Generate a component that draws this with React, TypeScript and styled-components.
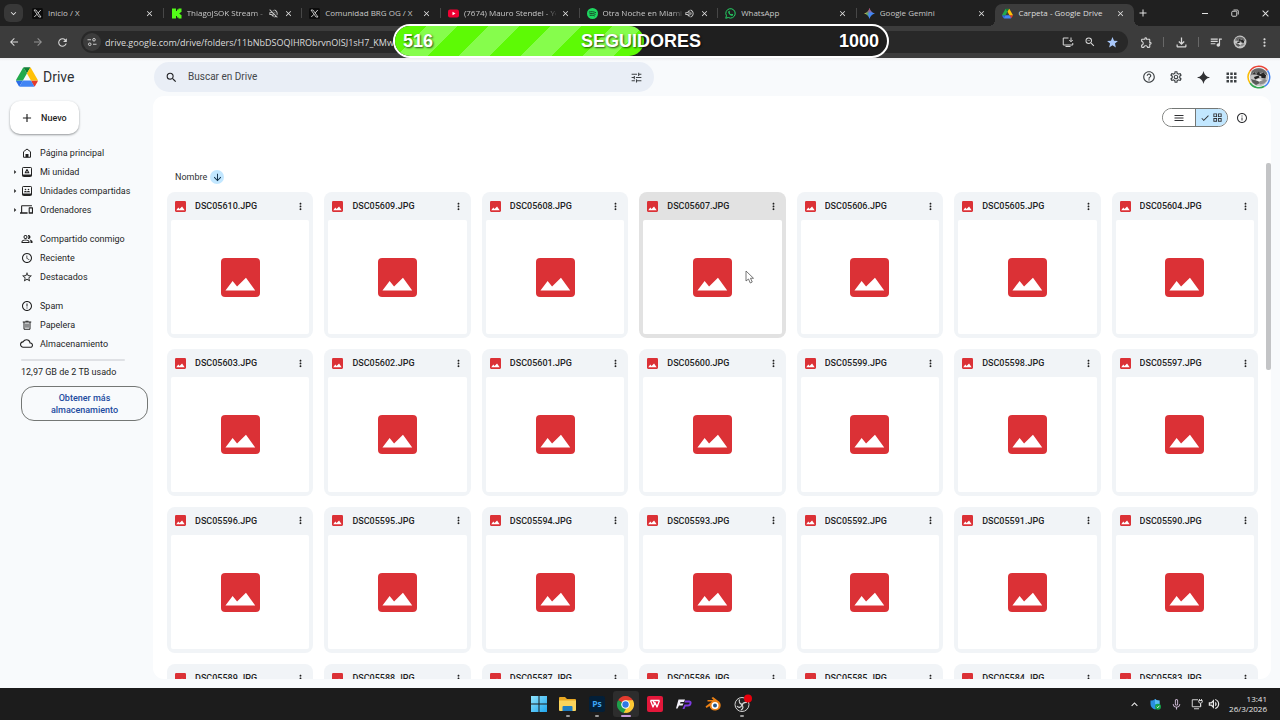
import React from "react";
import styled, { createGlobalStyle, css } from "styled-components";
import {
  MdAdd,
  MdApps,
  MdArrowBack,
  MdArrowDownward,
  MdArrowForward,
  MdArrowRight,
  MdCheck,
  MdClose,
  MdErrorOutline,
  MdHelpOutline,
  MdKeyboardArrowDown,
  MdKeyboardArrowUp,
  MdMenu,
  MdMicNone,
  MdMoreVert,
  MdOutlineAccessTime,
  MdOutlineCloud,
  MdOutlineDevices,
  MdOutlineExtension,
  MdOutlineFileDownload,
  MdOutlineGridView,
  MdOutlineInfo,
  MdOutlinePeopleAlt,
  MdOutlineQueueMusic,
  MdOutlineSettings,
  MdOutlineVolumeOff,
  MdOutlineVolumeUp,
  MdRefresh,
  MdSearch,
  MdStar,
  MdStarOutline,
  MdTune,
  MdZoomOut,
} from "react-icons/md";

const uiFont = `"Open Sans", "Noto Sans", sans-serif`;
const driveFont = `Roboto, "Noto Sans", sans-serif`;

const GlobalStyle = createGlobalStyle`
  *, *::before, *::after { box-sizing: border-box; }
  body { margin: 0; background: #f8fafc; }
  button, input { font: inherit; color: inherit; margin: 0; padding: 0; border: 0; background: none; }
  a { color: inherit; text-decoration: none; }
  ul { list-style: none; margin: 0; padding: 0; }
  svg { display: block; flex: none; }
`;

const Desktop = styled.div`
  position: relative;
  display: flex;
  flex-direction: column;
  height: 100vh;
  overflow: hidden;
  font-family: ${driveFont};
  font-size: 9px;
  line-height: 12px;
  color: #1f1f1f;
`;

/* ---------- Browser frame ---------- */

const TabStrip = styled.header`
  display: flex;
  height: 26px;
  padding-left: 4px;
  background: #202020;
  color: #c9c9c9;
  font-family: ${uiFont};
  font-size: 8px;
`;

const TabSearch = styled.button`
  display: grid;
  place-items: center;
  width: 19px;
  height: 18px;
  margin: 4px 2px 0 0;
  border-radius: 6px;
  background: #383838;
  color: #e6e6e6;
`;

const TabList = styled.ul`
  display: flex;
  flex: 1;
  min-width: 0;
`;

const Tab = styled.li<{ $active?: boolean; $divider?: boolean }>`
  position: relative;
  display: flex;
  align-items: center;
  gap: 5px;
  flex: 1 1 0;
  min-width: 0;
  height: 22px;
  margin-top: 4px;
  padding: 0 9px 4px 7px;

  ${(p) =>
    p.$divider &&
    css`
      &::after {
        content: "";
        position: absolute;
        right: 0;
        top: 4px;
        width: 1px;
        height: 10px;
        background: #474747;
      }
    `}

  ${(p) =>
    p.$active &&
    css`
      border-radius: 7px 7px 0 0;
      background: #3c3c3c;
      color: #dedede;
      &::before,
      &::after {
        content: "";
        position: absolute;
        bottom: 0;
        width: 6px;
        height: 6px;
      }
      &::before {
        left: -6px;
        background: radial-gradient(circle at 0 0, transparent 6px, #3c3c3c 6px);
      }
      &::after {
        right: -6px;
        background: radial-gradient(circle at 100% 0, transparent 6px, #3c3c3c 6px);
      }
    `}
`;

const TabTitle = styled.span<{ $faded?: boolean }>`
  flex: 1;
  min-width: 0;
  overflow: hidden;
  white-space: nowrap;
  ${(p) =>
    p.$faded &&
    css`
      mask-image: linear-gradient(to right, #000 calc(100% - 12px), #0003);
    `}
`;

const TabAudio = styled.span`
  margin: 0 -1px 0 -4px;
`;

const StripButton = styled.button<{ $width?: number }>`
  display: grid;
  place-items: center;
  width: ${(p) => p.$width ?? 10}px;
  color: #e3e3e3;
`;

const WindowControls = styled.div`
  display: flex;
  margin-left: 38px;
`;

const Toolbar = styled.div`
  display: flex;
  align-items: center;
  height: 32px;
  padding: 0 4px 0 2px;
  background: #3c3c3c;
  color: #d8d8d8;
`;

const ToolButton = styled.button<{ $dim?: boolean; $width?: number }>`
  display: grid;
  place-items: center;
  width: ${(p) => p.$width ?? 24}px;
  height: 22px;
  opacity: ${(p) => (p.$dim ? 0.55 : 1)};
`;

const ToolDivider = styled.span`
  width: 1px;
  height: 10px;
  margin: 0 5px;
  background: #686868;
`;

const AddressBar = styled.form`
  display: flex;
  align-items: center;
  flex: 1;
  height: 22px;
  margin: 0 6px 0 7px;
  padding: 0 5px 0 2px;
  border-radius: 11px;
  background: #282828;
`;

const SiteInfo = styled.button`
  display: grid;
  place-items: center;
  width: 18px;
  height: 18px;
  margin-right: 4px;
  border-radius: 9px;
  background: #3c3c3c;
`;

const AddressInput = styled.input`
  flex: 1;
  min-width: 0;
  height: 18px;
  font-family: ${uiFont};
  font-size: 9px;
  color: #dcdcdc;
  outline: none;
`;

/* ---------- Follower goal overlay ---------- */

const Goal = styled.div`
  position: absolute;
  top: 24px;
  left: 50%;
  width: 496px;
  height: 34px;
  margin-left: -247px;
  display: grid;
  grid-template-columns: 1fr auto 1fr;
  align-items: center;
  padding: 0 8px;
  overflow: hidden;
  border: 2px solid #fff;
  border-radius: 17px;
  background: #1f1f1f;
  color: #fff;
  font: bold 18px/24px "Liberation Sans", Arial, sans-serif;
  text-shadow: 1px 1px 2px #000000b0;
`;

const GoalFill = styled.div`
  position: absolute;
  inset: 0 auto 0 0;
  border-radius: 0 15px 15px 0;
  background: repeating-linear-gradient(135deg, #5dfa05 0 22px, #86fd4c 22px 44px);
`;

const GoalText = styled.span<{ $end?: boolean }>`
  position: relative;
  text-align: ${(p) => (p.$end ? "right" : "left")};
`;

/* ---------- Drive header ---------- */

const DriveHeader = styled.div`
  display: flex;
  align-items: center;
  height: 38px;
  background: linear-gradient(#ececee, #f8fafc 3px);
  color: #3c4043;
`;

const Brand = styled.a`
  display: flex;
  align-items: center;
  gap: 5px;
  width: 154px;
  padding-left: 16px;
  font-size: 14px;
  line-height: 18px;
  color: #303236;
`;

const SearchBox = styled.form`
  display: flex;
  align-items: center;
  flex: 0 1 500px;
  height: 30px;
  padding: 0 11px;
  border-radius: 15px;
  background: #e9eef6;
`;

const SearchInput = styled.input`
  flex: 1;
  min-width: 0;
  margin: 0 10px;
  font-size: 10px;
  line-height: 14px;
  outline: none;
  &::placeholder {
    color: #44474a;
    opacity: 1;
  }
`;

const HeaderActions = styled.div`
  display: flex;
  align-items: center;
  margin-left: auto;
  padding-right: 8px;
`;

const HeaderButton = styled.button<{ $wide?: boolean }>`
  display: grid;
  place-items: center;
  width: ${(p) => (p.$wide ? 28 : 27)}px;
  height: 27px;
`;

/* ---------- Sidebar ---------- */

const Workspace = styled.div`
  display: flex;
  flex: 1;
  min-height: 0;
  padding: 0 9px 9px 0;
  background: #f8fafc;
`;

const Sidebar = styled.aside`
  width: 153px;
  flex: none;
  padding: 5px 5px 0 10px;
`;

const NewButton = styled.button`
  display: flex;
  align-items: center;
  gap: 7px;
  height: 33px;
  padding: 0 12px 0 10px;
  border-radius: 10px;
  background: #fff;
  box-shadow: 0 1px 2px #3c404370, 0 1px 3px #3c404320;
  font-weight: 500;
`;

const NavGroup = styled.ul`
  margin-top: 10px;
  &:first-child {
    margin-top: 9px;
  }
`;

const NavLink = styled.a`
  display: grid;
  grid-template-columns: 10px 13px 1fr;
  align-items: center;
  height: 19px;
  justify-items: center;
`;

const NavLabel = styled.span`
  justify-self: start;
  padding-left: 7px;
  white-space: nowrap;
`;

const StorageBar = styled.div`
  height: 2px;
  margin: 6px 23px 5px 11px;
  border-radius: 1px;
  background: #dfe1e5;
`;

const StorageText = styled.p`
  margin: 0 0 8px 11px;
`;

const StorageButton = styled.button`
  width: 127px;
  height: 35px;
  margin-left: 11px;
  padding: 0 24px;
  border: 1px solid #747775;
  border-radius: 13px;
  font-weight: 500;
  color: #1c4ba0;
`;

/* ---------- File panel ---------- */

const Panel = styled.main`
  display: flex;
  flex-direction: column;
  flex: 1;
  min-width: 0;
  border-radius: 11px;
  background: #fff;
  overflow: hidden;
`;

const PanelBar = styled.div`
  display: flex;
  align-items: center;
  justify-content: flex-end;
  gap: 8px;
  height: 67px;
  padding: 0 23px 24px 0;
  color: #303134;
`;

const ViewSwitch = styled.div`
  display: flex;
  height: 19px;
  border: 1px solid #747775;
  border-radius: 10px;
  overflow: hidden;
`;

const ViewButton = styled.button<{ $on?: boolean }>`
  display: flex;
  align-items: center;
  justify-content: center;
  gap: 2px;
  width: 32px;
  background: ${(p) => (p.$on ? "#c2e7ff" : "#fff")};
  & + & {
    border-left: 1px solid #747775;
  }
`;

const PlainButton = styled.button`
  display: grid;
  place-items: center;
`;

const ScrollArea = styled.div`
  display: flex;
  align-items: flex-start;
  flex: 1;
  min-height: 0;
  overflow: hidden;
`;

const ScrollThumb = styled.div`
  width: 5px;
  height: 207px;
  border-radius: 2px;
  background: #c3c4c6;
`;

const Files = styled.div`
  flex: 1;
  min-width: 0;
  padding: 6px 8px 0 14px;
`;

const SortButton = styled.button`
  display: flex;
  align-items: center;
  gap: 3px;
  height: 16px;
  margin: 0 0 7px 8px;
  color: #303134;
`;

const SortMark = styled.span`
  display: grid;
  place-items: center;
  width: 14px;
  height: 14px;
  border-radius: 7px;
  background: #c2e7ff;
  color: #0b2a44;
`;

const FileGrid = styled.ul`
  display: grid;
  grid-template-columns: repeat(7, minmax(0, 1fr));
  gap: 11px;
`;

const FileCard = styled.li<{ $hover?: boolean }>`
  position: relative;
  display: flex;
  flex-direction: column;
  aspect-ratio: 1;
  padding: 0 4px 4px;
  border-radius: 8px;
  background: ${(p) => (p.$hover ? "#e2e2e2" : "#f1f4f7")};
`;

const FileHeader = styled.div`
  display: flex;
  align-items: center;
  gap: 9px;
  height: 28px;
  padding: 0 3px 0 4px;
`;

const FileName = styled.span`
  flex: 1;
  min-width: 0;
  overflow: hidden;
  white-space: nowrap;
  font-weight: 500;
`;

const Thumb = styled.div`
  display: grid;
  place-items: center;
  flex: 1;
  border-radius: 2px;
  background: #fff;
`;

const Cursor = styled.svg`
  position: absolute;
  left: 106px;
  top: 78px;
`;

/* ---------- Taskbar ---------- */

const Taskbar = styled.footer`
  display: grid;
  grid-template-columns: 1fr auto 1fr;
  align-items: center;
  height: 32px;
  padding-right: 13px;
  background: #1c1c1c;
  color: #e8e8e8;
  font-family: ${uiFont};
`;

const Dock = styled.div`
  grid-column: 2;
  display: flex;
  gap: 3px;
  padding-left: 13px;
`;

const DockButton = styled.button<{ $state?: "open" | "focused" }>`
  position: relative;
  display: grid;
  place-items: center;
  width: 26px;
  height: 26px;
  border-radius: 3px;
  background: ${(p) => (p.$state === "focused" ? "#2d2d2d" : "transparent")};
  ${(p) =>
    p.$state &&
    css`
      &::after {
        content: "";
        position: absolute;
        bottom: 0;
        left: 50%;
        transform: translateX(-50%);
        width: ${p.$state === "focused" ? 10 : 4}px;
        height: 2px;
        border-radius: 1px;
        background: ${p.$state === "focused" ? "#c79ad8" : "#9a9a9a"};
      }
    `}
`;

const Tray = styled.div`
  display: flex;
  align-items: center;
  justify-content: flex-end;
`;

const TrayButton = styled.button<{ $width: number }>`
  display: grid;
  place-items: center;
  width: ${(p) => p.$width}px;
`;

const Clock = styled.time`
  min-width: 46px;
  font-size: 8px;
  line-height: 10px;
  text-align: right;
  white-space: nowrap;
`;

/* ---------- Drawings ---------- */

const XIcon = () => (
  <svg width="11" height="11" viewBox="0 0 22 22">
    <rect width="22" height="22" rx="3" fill="#0c0c0c" />
    <path d="M4 4h4l10 14h-4z" fill="none" stroke="#ddd" strokeWidth="1.6" />
    <path d="M17.500 4 12 10.300M10 12.500 4.500 18" stroke="#ddd" strokeWidth="1.800" />
  </svg>
);

const KickIcon = () => (
  <svg width="11" height="11" viewBox="0 0 22 22">
    <path d="M2 1h8v5h2V3h3V1h6v7h-2v2h-2v2h2v2h2v7h-6v-2h-3v-3h-2v5H2z" fill="#53fc18" />
  </svg>
);

const YouTubeIcon = () => (
  <svg width="11" height="11" viewBox="0 0 22 22">
    <rect y="3" width="22" height="16" rx="4" fill="#f00033" />
    <path d="m9 7.500 6 3.500-6 3.500z" fill="#fff" />
  </svg>
);

const SpotifyIcon = () => (
  <svg width="11" height="11" viewBox="0 0 22 22">
    <circle cx="11" cy="11" r="11" fill="#1ed760" />
    <path
      d="M4.500 8c4.500-1.300 9-.9 13 1.300M5.500 11.500c3.800-1 7.500-.7 10.800 1.200M6.200 14.800c3-.7 6-.5 8.800 1"
      fill="none"
      stroke="#173c22"
      strokeWidth="1.800"
      strokeLinecap="round"
    />
  </svg>
);

const WhatsAppIcon = () => (
  <svg width="11" height="11" viewBox="0 0 22 22">
    <path
      d="m1.500 20.500 1.400-5A9.400 9.400 0 1 1 6.500 19z"
      fill="none"
      stroke="#25d366"
      strokeWidth="2"
      strokeLinejoin="round"
    />
    <path
      d="M7.500 6c-2 1.500-1 4.500 1.500 7s5.500 3.300 7 1.300c.5-.8.3-1.300-.5-1.700l-1.800-.9-1.400 1.200c-1.600-.6-2.600-1.700-3.400-3.200L10 8.500 9.200 6.300C8.900 5.600 8.200 5.500 7.500 6z"
      fill="#25d366"
    />
  </svg>
);

const GeminiIcon = () => (
  <svg width="11" height="11" viewBox="0 0 22 22">
    <defs>
      <linearGradient id="gemini-h" x1="0" x2="1">
        <stop offset="0" stopColor="#f6c343" />
        <stop offset=".3" stopColor="#5aa469" />
        <stop offset=".5" stopColor="#4285f4" />
      </linearGradient>
      <linearGradient id="gemini-v" x1="0" x2="0" y1="0" y2="1">
        <stop offset="0" stopColor="#ea4335" />
        <stop offset=".5" stopColor="#ea4335" stopOpacity="0" />
      </linearGradient>
    </defs>
    <path d="M11 0c1.500 6 5 9.500 11 11-6 1.500-9.500 5-11 11-1.500-6-5-9.500-11-11C6 9.500 9.500 6 11 0z" fill="url(#gemini-h)" />
    <path d="M11 0c1.500 6 5 9.500 11 11-6 1.500-9.500 5-11 11-1.500-6-5-9.500-11-11C6 9.500 9.500 6 11 0z" fill="url(#gemini-v)" />
  </svg>
);

const DriveLogo = ({ size }: { size: number }) => (
  <svg width={size} height={size} viewBox="0 0 88 88">
    <g transform="translate(0 5)">
      <path d="m6.600 66.850 3.850 6.650c.8 1.400 1.950 2.500 3.300 3.300l13.750-23.800H0c0 1.550.4 3.100 1.200 4.500z" fill="#2b6de8" />
      <path d="M43.650 25 29.900 1.200c-1.350.8-2.500 1.900-3.300 3.300L1.200 48.500A9 9 0 0 0 0 53h27.500z" fill="#22a94b" />
      <path d="M73.550 76.800c1.350-.8 2.500-1.900 3.300-3.300l1.600-2.750L86.100 57.500c.8-1.400 1.200-2.950 1.200-4.500H59.800l5.850 11.500z" fill="#e43a2e" />
      <path d="M43.650 25 57.400 1.200C56.050.4 54.500 0 52.900 0H34.400c-1.600 0-3.150.45-4.500 1.200z" fill="#128038" />
      <path d="M59.800 53H27.500L13.750 76.800c1.350.8 2.900 1.200 4.500 1.200h50.800c1.600 0 3.150-.45 4.500-1.200z" fill="#4285f4" />
      <path d="M73.400 26.500 60.700 4.500c-.8-1.400-1.950-2.500-3.300-3.300L43.650 25 59.800 53h27.450c0-1.550-.4-3.100-1.200-4.500z" fill="#ffc107" />
    </g>
  </svg>
);

const ImageIcon = ({ size }: { size: number }) => (
  <svg width={size} height={size} viewBox="0 0 114 114">
    <rect width="114" height="114" rx="12" fill="#db3136" />
    <path d="M13 95 34 67l13 16 26-25 27 37z" fill="#fff" />
  </svg>
);

const HomeIcon = () => (
  <svg width="12" height="12" viewBox="0 0 24 24">
    <path d="M5 20.500V9.500L12 4l7 5.500v11z" fill="none" stroke="#222" strokeWidth="2" strokeLinejoin="round" />
    <path d="M9 20.500v-6.500h6v6.500z" fill="#222" />
  </svg>
);

const MyDriveIcon = () => (
  <svg width="12" height="12" viewBox="0 0 24 24" fill="none" stroke="#222" strokeWidth="2">
    <rect x="3" y="3" width="18" height="18" rx="1.500" />
    <path d="M3 18.500h18" strokeWidth="3" />
    <path d="m12 7-3.500 6.500h7z" strokeWidth="2.200" strokeLinejoin="round" />
  </svg>
);

const SharedDrivesIcon = () => (
  <svg width="12" height="12" viewBox="0 0 24 24">
    <rect x="3" y="3" width="18" height="18" rx="1.500" fill="none" stroke="#222" strokeWidth="2" />
    <path d="M3 18.500h18" stroke="#222" strokeWidth="3" />
    <circle cx="9" cy="9" r="1.600" fill="#222" />
    <circle cx="15" cy="9" r="1.600" fill="#222" />
    <path d="M6 14.500c0-3.200 5.500-3.200 5.700-.6.500-2.600 6.300-2.600 6.300.6z" fill="#222" />
  </svg>
);

const TrashIcon = () => (
  <svg width="12" height="12" viewBox="0 0 24 24" fill="none" stroke="#222" strokeWidth="2">
    <path d="M3.500 6h17M9 4.500h6M6 6v14.500h12V6M10 9v8.500M14 9v8.500" />
  </svg>
);

const SparkIcon = () => (
  <svg width="13" height="13" viewBox="0 0 22 22">
    <path d="M11 0c1.500 6.500 4.500 9.500 11 11-6.500 1.500-9.500 4.500-11 11-1.500-6.500-4.500-9.500-11-11C6.500 9.500 9.500 6.500 11 0z" fill="#303134" />
  </svg>
);

const SiteIcon = () => (
  <svg width="10" height="10" viewBox="0 0 20 20" fill="none" stroke="#ddd" strokeWidth="1.800">
    <path d="M1 5.500h7M12 14.500h7" />
    <circle cx="14" cy="5.500" r="2.600" />
    <circle cx="5.500" cy="14.500" r="2.600" />
  </svg>
);

const InstallIcon = () => (
  <svg width="12" height="12" viewBox="0 0 24 24" fill="none" stroke="currentColor" strokeWidth="2">
    <path d="M13 4H2.500v14h19v-4M7 21h10M18 3v8M14.500 8l3.500 3.500L21.500 8" />
  </svg>
);

const RestoreIcon = () => (
  <svg width="8" height="8" viewBox="0 0 16 16" fill="none" stroke="currentColor" strokeWidth="1.800">
    <rect x="1.500" y="4.500" width="10" height="10" rx="2" />
    <path d="M5 2h7.500a2 2 0 0 1 2 2v7" />
  </svg>
);

const MinimizeIcon = () => (
  <svg width="8" height="8" viewBox="0 0 8 8">
    <path d="M1 4.500h6" stroke="currentColor" />
  </svg>
);

const Portrait = ({ size, ring }: { size: number; ring?: boolean }) => (
  <svg width={size} height={size} viewBox="0 0 48 48">
    {ring && (
      <g fill="none" strokeWidth="3">
        <path d="M6 12A21.500 21.500 0 0 1 41 11" stroke="#ea4335" />
        <path d="M41 11a21.500 21.500 0 0 1-6 31.500" stroke="#4285f4" />
        <path d="M35 42.500A21.500 21.500 0 0 1 6 36" stroke="#34a853" />
        <path d="M6 36a21.500 21.500 0 0 1 0-24" stroke="#fbbc04" />
      </g>
    )}
    <circle cx="24" cy="24" r={ring ? 18.5 : 22} fill="#c4c4c4" />
    <path d="M9 13C16 4 32 4 39 14l2 7-10-6-9 3-8-4-7 8z" fill="#6a6a6a" />
    <path d="m10 19 5-5 3 4 6-5 2 5 7-3 5 6-12 1-7-3z" fill="#2b2b2b" />
    <path d="m14 24 9-3 2 4-9 4zM28 20l10 0-1 7-8-1z" fill="#222" />
    <path d="m8 28 6 2 8 1 4 5-8 4-7-5z" fill="#5a5a5a" />
    <path d="m24 30 12-2 4 3-6 6-8 2z" fill="#8c8c8c" />
    <path d="m17 30 6-2 9 2-8 3z" fill="#f4f4f4" />
  </svg>
);

const WindowsIcon = () => (
  <svg width="16" height="16" viewBox="0 0 32 32">
    <defs>
      <linearGradient id="win" x1="0" x2="1" y1="0" y2="1">
        <stop offset="0" stopColor="#8fe3fc" />
        <stop offset="1" stopColor="#1fa6ee" />
      </linearGradient>
    </defs>
    <path d="M0 0h15v15H0zM17 0h15v15H17zM0 17h15v15H0zM17 17h15v15H17z" fill="url(#win)" />
  </svg>
);

const FolderIcon = () => (
  <svg width="17" height="16" viewBox="0 0 34 32">
    <path d="M0 4q0-2 2-2h10l4 4h16q2 0 2 2v20H0z" fill="#e8a823" />
    <path d="M0 9h34v19q0 2-2 2H2q-2 0-2-2z" fill="#fbd45c" />
    <path d="M7 30v-8q0-2 2-2h16q2 0 2 2v8z" fill="#1f7fc4" />
  </svg>
);

const PhotoshopIcon = () => (
  <svg width="16" height="16" viewBox="0 0 32 32">
    <rect width="32" height="32" rx="5" fill="#031f38" />
    <text x="16" y="22" textAnchor="middle" fontFamily="Open Sans, sans-serif" fontWeight="700" fontSize="17" fill="#3ea6f5">
      Ps
    </text>
  </svg>
);

const ChromeIcon = () => (
  <svg width="17" height="17" viewBox="0 0 48 48">
    <path d="M24 24 3.200 12A24 24 0 0 1 44.800 12z" fill="#e33b2e" />
    <path d="M24 24 44.800 12A24 24 0 0 1 24 48z" fill="#fcc934" />
    <path d="M24 24v24A24 24 0 0 1 3.200 12z" fill="#1e9e4a" />
    <path d="M24 12h20.800a24 24 0 0 1 1 3L34 27z" fill="#fcc934" />
    <path d="M33.500 29.500 24 48l-5-1 8-14z" fill="#fcc934" />
    <circle cx="24" cy="24" r="12" fill="#fff" />
    <circle cx="24" cy="24" r="9" fill="#2f78e6" />
  </svg>
);

const WpsIcon = () => (
  <svg width="16" height="16" viewBox="0 0 32 32">
    <rect width="32" height="32" rx="4" fill="#e3173a" />
    <path d="M7 9h18M7 9l5 13 4-9 4 9 5-13M12 9l4 9" fill="none" stroke="#fff" strokeWidth="2.600" strokeLinejoin="round" />
  </svg>
);

const FpIcon = () => (
  <svg width="16" height="12" viewBox="0 0 32 24">
    <path d="M5 3h13l-2 5H9l-1 3h7l-2 4H6l-3 6H0z" fill="#f4f1fa" />
    <path d="M18 5h9q5 1 4 6-1 6-7 6h-5l-2 5h-4l4-9h7q2 0 3-2t-1-2h-9z" fill="#7d3be0" />
  </svg>
);

const BlenderIcon = () => (
  <svg width="16" height="14" viewBox="0 0 32 28">
    <path d="M1 19 14 9H5V6h12l-4-4 3-2 12 9c6 6 4 16-6 18-7 1-12-3-13-9l-6 4z" fill="#ec8013" />
    <circle cx="20" cy="17" r="7" fill="#fff" />
    <circle cx="20" cy="17" r="4" fill="#265787" />
  </svg>
);

const ObsIcon = () => (
  <svg width="20" height="20" viewBox="0 0 40 40">
    <circle cx="20" cy="21" r="14" fill="#242424" stroke="#d4d4d4" strokeWidth="2" />
    <path d="M15 11c-2 6 1 9 6 10M30 17c-6-1-9 1-10 6M18 32c5-3 5-7 1-11M10 24c3 4 7 4 10-2" fill="none" stroke="#d4d4d4" strokeWidth="2.400" />
    <circle cx="32" cy="9" r="8" fill="#e8000c" />
  </svg>
);

const ShieldIcon = () => (
  <svg width="11" height="11" viewBox="0 0 22 22">
    <path d="M1 3c4 0 7-1 9-3 3 2 5 3 9 3v7c0 6-4 9-9 11-5-2-9-5-9-11z" fill="#2a8fe0" />
    <path d="M10 0c3 2 5 3 9 3v7h-9z" fill="#58bdf5" />
    <circle cx="16" cy="15.500" r="6" fill="#16a34a" />
    <path d="m13.500 15.500 2 2 3-4" fill="none" stroke="#fff" strokeWidth="1.600" />
  </svg>
);

const NetworkIcon = () => (
  <svg width="12" height="12" viewBox="0 0 24 24" fill="none" stroke="currentColor" strokeWidth="1.800">
    <path d="M14 3.500H2.500v14h17v-5M6 21.500h10" />
    <path d="M17 2v3M21 2v3M15.500 5h7v3q-1 2.500-3.500 2.500T15.500 8zM19 10.500V17" />
  </svg>
);

/* ---------- Data ---------- */

type TabData = { title: string; icon: React.ReactNode; audio?: "on" | "muted"; faded?: boolean };

const tabs: TabData[] = [
  { title: "Inicio / X", icon: <XIcon /> },
  { title: "ThiagoJSOK Stream -", icon: <KickIcon />, audio: "muted", faded: true },
  { title: "Comunidad BRG OG / X", icon: <XIcon /> },
  { title: "(7674) Mauro Stendel - Yo", icon: <YouTubeIcon />, faded: true },
  { title: "Otra Noche en Miami", icon: <SpotifyIcon />, audio: "on", faded: true },
  { title: "WhatsApp", icon: <WhatsAppIcon /> },
  { title: "Google Gemini", icon: <GeminiIcon /> },
  { title: "Carpeta - Google Drive", icon: <DriveLogo size={11} /> },
];

type NavItem = { label: string; icon: React.ReactNode; nested?: boolean };

const navGroups: NavItem[][] = [
  [
    { label: "Página principal", icon: <HomeIcon /> },
    { label: "Mi unidad", icon: <MyDriveIcon />, nested: true },
    { label: "Unidades compartidas", icon: <SharedDrivesIcon />, nested: true },
    { label: "Ordenadores", icon: <MdOutlineDevices size={13} />, nested: true },
  ],
  [
    { label: "Compartido conmigo", icon: <MdOutlinePeopleAlt size={12} /> },
    { label: "Reciente", icon: <MdOutlineAccessTime size={12} /> },
    { label: "Destacados", icon: <MdStarOutline size={12} /> },
  ],
  [
    { label: "Spam", icon: <MdErrorOutline size={12} /> },
    { label: "Papelera", icon: <TrashIcon /> },
    { label: "Almacenamiento", icon: <MdOutlineCloud size={13} /> },
  ],
];

const firstFile = 5610;
const hoveredFile = 5607;
const files = Array.from({ length: 28 }, (_, i) => firstFile - i);

const dock: { name: string; icon: React.ReactNode; state?: "open" | "focused" }[] = [
  { name: "Inicio", icon: <WindowsIcon /> },
  { name: "Explorador de archivos", icon: <FolderIcon />, state: "open" },
  { name: "Photoshop", icon: <PhotoshopIcon />, state: "open" },
  { name: "Chrome", icon: <ChromeIcon />, state: "focused" },
  { name: "WPS Office", icon: <WpsIcon /> },
  { name: "FP", icon: <FpIcon /> },
  { name: "Blender", icon: <BlenderIcon /> },
  { name: "OBS Studio", icon: <ObsIcon />, state: "open" },
];

const goal = { current: 516, target: 1000 };

/* ---------- Page ---------- */

export default function App() {
  return (
    <Desktop>
      <GlobalStyle />

      <TabStrip>
        <TabSearch aria-label="Buscar pestañas">
          <MdKeyboardArrowDown size={11} />
        </TabSearch>
        <TabList>
          {tabs.map((tab, i) => (
            <Tab key={i} $active={i === tabs.length - 1} $divider={i < tabs.length - 2}>
              {tab.icon}
              <TabTitle $faded={tab.faded}>{tab.title}</TabTitle>
              {tab.audio && (
                <TabAudio>
                  {tab.audio === "muted" ? <MdOutlineVolumeOff size={11} /> : <MdOutlineVolumeUp size={11} />}
                </TabAudio>
              )}
              <StripButton aria-label="Cerrar pestaña">
                <MdClose size={9} />
              </StripButton>
            </Tab>
          ))}
        </TabList>
        <StripButton $width={18} aria-label="Nueva pestaña">
          <MdAdd size={12} />
        </StripButton>
        <WindowControls>
          <StripButton $width={30} aria-label="Minimizar">
            <MinimizeIcon />
          </StripButton>
          <StripButton $width={30} aria-label="Restaurar">
            <RestoreIcon />
          </StripButton>
          <StripButton $width={30} aria-label="Cerrar">
            <MdClose size={11} />
          </StripButton>
        </WindowControls>
      </TabStrip>

      <Toolbar>
        <ToolButton aria-label="Atrás">
          <MdArrowBack size={12} />
        </ToolButton>
        <ToolButton aria-label="Adelante" $dim>
          <MdArrowForward size={12} />
        </ToolButton>
        <ToolButton aria-label="Recargar">
          <MdRefresh size={13} />
        </ToolButton>
        <AddressBar>
          <SiteInfo type="button" aria-label="Información del sitio">
            <SiteIcon />
          </SiteInfo>
          <AddressInput
            aria-label="Dirección"
            defaultValue="drive.google.com/drive/folders/11bNbDSOQIHRObrvnOISJ1sH7_KMwF"
          />
          <ToolButton type="button" $width={22} aria-label="Instalar">
            <InstallIcon />
          </ToolButton>
          <ToolButton type="button" $width={22} aria-label="Zoom">
            <MdZoomOut size={12} />
          </ToolButton>
          <ToolButton type="button" $width={22} aria-label="Marcador">
            <MdStar size={13} color="#a8c7fa" />
          </ToolButton>
        </AddressBar>
        <ToolButton aria-label="Extensiones">
          <MdOutlineExtension size={13} />
        </ToolButton>
        <ToolDivider />
        <ToolButton aria-label="Descargas">
          <MdOutlineFileDownload size={15} />
        </ToolButton>
        <ToolDivider />
        <ToolButton aria-label="Multimedia">
          <MdOutlineQueueMusic size={14} />
        </ToolButton>
        <ToolButton aria-label="Perfil">
          <Portrait size={14} />
        </ToolButton>
        <ToolButton aria-label="Menú">
          <MdMoreVert size={13} />
        </ToolButton>
      </Toolbar>

      <DriveHeader>
        <Brand href="#">
          <DriveLogo size={22} />
          Drive
        </Brand>
        <SearchBox role="search">
          <MdSearch size={13} color="#202124" />
          <SearchInput aria-label="Buscar en Drive" placeholder="Buscar en Drive" />
          <PlainButton type="button" aria-label="Búsqueda avanzada">
            <MdTune size={13} />
          </PlainButton>
        </SearchBox>
        <HeaderActions>
          <HeaderButton aria-label="Ayuda">
            <MdHelpOutline size={14} />
          </HeaderButton>
          <HeaderButton aria-label="Configuración">
            <MdOutlineSettings size={14} />
          </HeaderButton>
          <HeaderButton aria-label="Gemini" $wide>
            <SparkIcon />
          </HeaderButton>
          <HeaderButton aria-label="Aplicaciones" $wide>
            <MdApps size={15} />
          </HeaderButton>
          <HeaderButton aria-label="Cuenta">
            <Portrait size={24} ring />
          </HeaderButton>
        </HeaderActions>
      </DriveHeader>

      <Workspace>
        <Sidebar>
          <NewButton>
            <MdAdd size={14} />
            Nuevo
          </NewButton>
          <nav>
            {navGroups.map((group, i) => (
              <NavGroup key={i}>
                {group.map((item) => (
                  <li key={item.label}>
                    <NavLink href="#">
                      {item.nested ? <MdArrowRight size={10} /> : <span />}
                      {item.icon}
                      <NavLabel>{item.label}</NavLabel>
                    </NavLink>
                  </li>
                ))}
              </NavGroup>
            ))}
          </nav>
          <StorageBar />
          <StorageText>12,97 GB de 2 TB usado</StorageText>
          <StorageButton>Obtener más almacenamiento</StorageButton>
        </Sidebar>

        <Panel>
          <PanelBar>
            <ViewSwitch role="group" aria-label="Vista">
              <ViewButton aria-label="Lista" aria-pressed={false}>
                <MdMenu size={12} />
              </ViewButton>
              <ViewButton aria-label="Cuadrícula" aria-pressed $on>
                <MdCheck size={10} />
                <MdOutlineGridView size={11} />
              </ViewButton>
            </ViewSwitch>
            <PlainButton aria-label="Detalles">
              <MdOutlineInfo size={12} />
            </PlainButton>
          </PanelBar>

          <ScrollArea>
            <Files>
              <SortButton>
                Nombre
                <SortMark>
                  <MdArrowDownward size={11} />
                </SortMark>
              </SortButton>
              <FileGrid>
                {files.map((n) => (
                  <FileCard key={n} $hover={n === hoveredFile}>
                    <FileHeader>
                      <ImageIcon size={11} />
                      <FileName>{`DSC0${n}.JPG`}</FileName>
                      <PlainButton aria-label={`Más acciones para DSC0${n}.JPG`}>
                        <MdMoreVert size={11} />
                      </PlainButton>
                    </FileHeader>
                    <Thumb>
                      <ImageIcon size={39} />
                    </Thumb>
                    {n === hoveredFile && (
                      <Cursor width="9" height="14" viewBox="0 0 18 28">
                        <path
                          d="M2 2v20l5-4 3.500 8 4-2-3.500-7.500H17z"
                          fill="#fff"
                          stroke="#555"
                          strokeWidth="1.600"
                        />
                      </Cursor>
                    )}
                  </FileCard>
                ))}
              </FileGrid>
            </Files>
            <ScrollThumb />
          </ScrollArea>
        </Panel>
      </Workspace>

      <Taskbar>
        <Dock>
          {dock.map((app) => (
            <DockButton key={app.name} aria-label={app.name} $state={app.state}>
              {app.icon}
            </DockButton>
          ))}
        </Dock>
        <Tray>
          <TrayButton $width={21} aria-label="Iconos ocultos">
            <MdKeyboardArrowUp size={13} />
          </TrayButton>
          <TrayButton $width={21} aria-label="Seguridad">
            <ShieldIcon />
          </TrayButton>
          <TrayButton $width={21} aria-label="Micrófono">
            <MdMicNone size={13} color="#c9b4cf" />
          </TrayButton>
          <TrayButton $width={19} aria-label="Red">
            <NetworkIcon />
          </TrayButton>
          <TrayButton $width={15} aria-label="Volumen">
            <MdOutlineVolumeUp size={14} />
          </TrayButton>
          <Clock>
            13:41
            <br />
            26/3/2026
          </Clock>
        </Tray>
      </Taskbar>

      <Goal role="progressbar" aria-valuenow={goal.current} aria-valuemax={goal.target} aria-label="Seguidores">
        <GoalFill style={{ width: `${(goal.current / goal.target) * 100 - 1}%` }} />
        <GoalText>{goal.current}</GoalText>
        <GoalText>SEGUIDORES</GoalText>
        <GoalText $end>{goal.target}</GoalText>
      </Goal>
    </Desktop>
  );
}
